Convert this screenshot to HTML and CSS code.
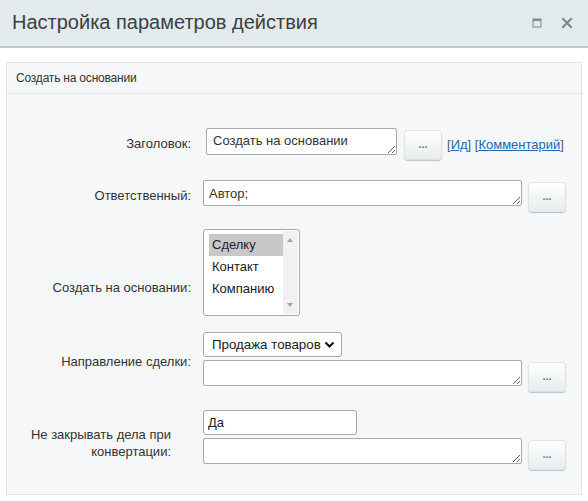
FILE: index.html
```html
<!DOCTYPE html>
<html lang="ru">
<head>
<meta charset="utf-8">
<title>Настройка параметров действия</title>
<link rel="stylesheet" href="styles.css">
</head>
<body>
<div class="dialog">
  <div class="titlebar">
    <div class="title">Настройка параметров действия</div>
    <div class="title-icons">
      <svg class="ico-max" width="10" height="10" viewBox="0 0 10 10"><rect x="1" y="1" width="8" height="8" fill="none" stroke="#7f8a91" stroke-width="1"/><rect x="1" y="1" width="8" height="2" fill="#7f8a91"/></svg>
      <svg class="ico-close" width="12" height="12" viewBox="0 0 12 12"><path d="M2 2 L10 10 M10 2 L2 10" stroke="#7a868e" stroke-width="2" stroke-linecap="square"/></svg>
    </div>
  </div>
  <div class="content">
    <div class="panel">
      <div class="panel-head">Создать на основании</div>
      <div class="panel-body">
        <div class="row">
          <div class="label">Заголовок:</div>
          <div class="field">
            <div class="line">
              <textarea class="ta ta-title">Создать на основании</textarea>
              <button class="dots">...</button>
              <span class="links">[<a href="#">Ид</a>] [<a href="#">Комментарий</a>]</span>
            </div>
          </div>
        </div>
        <div class="row">
          <div class="label">Ответственный:</div>
          <div class="field">
            <div class="line">
              <textarea class="ta ta-wide">Автор;</textarea>
              <button class="dots">...</button>
            </div>
          </div>
        </div>
        <div class="row">
          <div class="label label-low">Создать на основании:</div>
          <div class="field">
            <div class="listbox">
              <div class="options">
                <div class="opt opt-sel">Сделку</div>
                <div class="opt">Контакт</div>
                <div class="opt">Компанию</div>
              </div>
              <div class="scrollbar">
                <span class="arr arr-up"></span>
                <span class="arr arr-down"></span>
              </div>
            </div>
          </div>
        </div>
        <div class="row">
          <div class="label">Направление сделки:</div>
          <div class="field">
            <div class="select">
              <span>Продажа товаров</span>
              <svg width="11" height="8" viewBox="0 0 11 8"><path d="M1.5 1.5 L5.5 5.5 L9.5 1.5" fill="none" stroke="#111" stroke-width="2.2"/></svg>
            </div>
            <div class="line line-sub">
              <textarea class="ta ta-wide"></textarea>
              <button class="dots">...</button>
            </div>
          </div>
        </div>
        <div class="row">
          <div class="label label-narrow">Не закрывать дела при конвертации:</div>
          <div class="field">
            <input class="inp" type="text" value="Да">
            <div class="line line-sub">
              <textarea class="ta ta-wide"></textarea>
              <button class="dots">...</button>
            </div>
          </div>
        </div>
      </div>
    </div>
  </div>
</div>
</body>
</html>
```
FILE: styles.css
```css
* { box-sizing: border-box; }
html, body { margin: 0; padding: 0; background: #fff; }
body {
  font-family: "Liberation Sans", Arial, sans-serif;
  font-size: 13px;
  color: #333;
  width: 588px;
  height: 501px;
  overflow: hidden;
}
.titlebar {
  height: 48px;
  background: #e2eaec;
  border-bottom: 2px solid #c3c9cc;
  display: flex;
  align-items: center;
  justify-content: space-between;
  padding: 0 15px 2px 12px;
}
.title {
  font-size: 20px;
  color: #3b3f42;
  letter-spacing: 0;
}
.title-icons {
  display: flex;
  align-items: center;
  gap: 19px;
  padding-top: 1px;
}
.ico-max, .ico-close { display: block; }
.content { padding: 14px 6px 0 6px; }
.panel {
  border: 1px solid #e0e6e9;
  background: #f5f7f8;
  width: 576px;
  height: 433px;
}
.panel-head {
  height: 31px;
  border-bottom: 1px solid #e0e6e9;
  padding: 0 9px;
  line-height: 30px;
  font-size: 12px;
  letter-spacing: -0.2px;
  color: #333;
}
.panel-body {
  padding-top: 25px;
  display: flex;
  flex-direction: column;
}
.row {
  display: flex;
  align-items: center;
  padding: 9px 0;
}
.row:nth-child(2) { padding-top: 11px; }
.row:nth-child(3) { padding-top: 8px; align-items: flex-start; }
.row:nth-child(4) { padding-top: 7px; }
.label {
  width: 184px;
  flex: none;
  text-align: right;
  color: #333;
  line-height: 16px;
  margin-right: 12px;
}
.label-low { align-self: flex-end; margin-bottom: 20px; }
.label-narrow { padding-left: 0; padding-right: 20px; line-height: 17px; margin-top: 6px; }
.field { display: flex; flex-direction: column; }
.line { display: flex; align-items: flex-start; }
.line-sub { margin-top: 3px; }
.ta {
  font-family: "Liberation Sans", Arial, sans-serif;
  font-size: 13px;
  color: #333;
  border: 1px solid #a9a9a9;
  border-radius: 2px;
  background: #fff;
  padding: 5px 5px;
  line-height: 15px;
  height: 26px;
  margin: 0;
  resize: both;
  overflow: hidden;
}
.ta-title { width: 191px; height: 27px; margin-left: 3px; padding: 4px 6px; }
.ta-wide { width: 319px; }
.dots {
  width: 38px;
  height: 30px;
  margin: 2px 0 0 6px;
  border: 1px solid #dfe3e5;
  border-radius: 4px;
  background: linear-gradient(#ffffff, #e7ecee);
  box-shadow: 0 1px 1px rgba(0, 0, 0, 0.22);
  color: #6b7175;
  font-family: "Liberation Sans", Arial, sans-serif;
  font-size: 11px;
  font-weight: bold;
  letter-spacing: 0;
  padding: 0 0 2px 0;
  flex: none;
}
.ta-title + .dots { margin-left: 7px; }
.links {
  margin: 9px 0 0 5px;
  color: #535c69;
  white-space: nowrap;
}
.links a { color: #2067b0; text-decoration: underline; }
.listbox {
  width: 97px;
  height: 87px;
  border: 1px solid #a9a9a9;
  border-radius: 3px;
  background: #fff;
  display: flex;
  overflow: hidden;
}
.options { flex: 1; padding: 4px 0 0 5px; }
.opt {
  height: 22px;
  line-height: 22px;
  padding-left: 3px;
  color: #222;
}
.opt-sel { background: #c8c8c8; }
.scrollbar {
  width: 15px;
  margin: 1px 1px 1px 0;
  background: #f1f1f1;
  position: relative;
}
.arr {
  position: absolute;
  left: 4px;
  width: 0;
  height: 0;
  border-left: 3.5px solid transparent;
  border-right: 3.5px solid transparent;
}
.arr-up { top: 7px; border-bottom: 4px solid #a3a3a3; }
.arr-down { bottom: 7px; border-top: 4px solid #a3a3a3; }
.select {
  width: 139px;
  height: 25px;
  border: 1px solid #a9a9a9;
  border-radius: 3px;
  background: #fff;
  display: flex;
  align-items: center;
  justify-content: space-between;
  padding: 0 6px 0 8px;
  font-size: 13.3px;
  color: #222;
}
.inp {
  width: 154px;
  height: 25px;
  border: 1px solid #a9a9a9;
  border-radius: 3px;
  background: #fff;
  padding: 0 4px;
  margin: 0;
  font-family: "Liberation Sans", Arial, sans-serif;
  font-size: 13px;
  color: #222;
}
```
